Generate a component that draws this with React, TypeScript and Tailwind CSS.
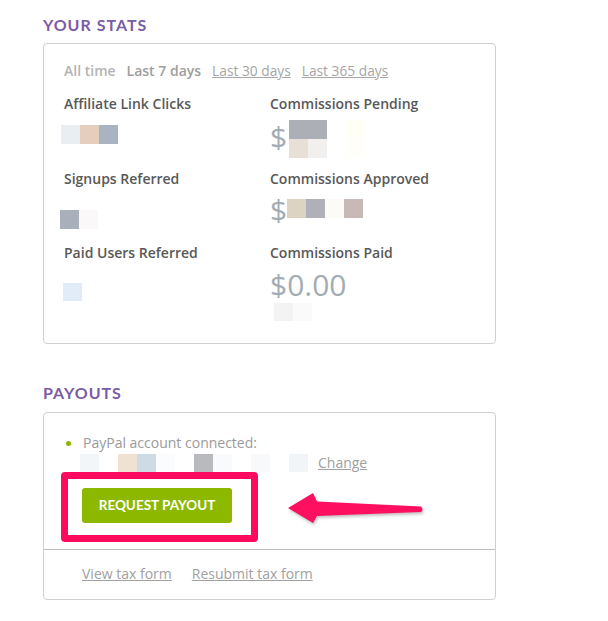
import React from "react";

type Cell = string;

function Mosaic({ rows, size = 19 }: { rows: Cell[][]; size?: number }) {
  return (
    <div className="flex flex-col">
      {rows.map((r, i) => (
        <div key={i} className="flex">
          {r.map((c, j) => (
            <div key={j} className={(size === 18 ? "w-[19px] h-[18px] " : "w-[19px] h-[19px] ") + c} />
          ))}
        </div>
      ))}
    </div>
  );
}

const heading =
  "font-['Lato',sans-serif] font-bold text-[16px] leading-[20px] tracking-[1px] text-[#7a5ca6] uppercase";

export default function App() {
  return (
    <div className="relative w-full min-h-[621px] bg-white font-['Open_Sans',sans-serif] pl-[43px] pt-[15px]">
      <div className={heading}>Your Stats</div>
      <div className="mt-[8px] w-[453px] border border-[#cfcfcf] rounded-[4px] pt-[17px] pb-[22px] pl-[20px] pr-[20px]">
        <div className="flex items-baseline gap-[11px] text-[14px] leading-[20px]">
          <span className="font-semibold text-[#b3b3b3]">All time</span>
          <span className="font-semibold text-[#9e9e9e]">Last 7 days</span>
          <span className="underline text-[13.75px] text-[#a6a6a6]">Last 30 days</span>
          <span className="underline text-[13.75px] text-[#a6a6a6]">Last 365 days</span>
        </div>
        <div className="mt-[13px] grid grid-cols-[206px_1fr] text-[14px] leading-[20px] text-[#585858] font-semibold">
          {/* Row 1 */}
          <div className="h-[75px]">
            <div>Affiliate Link Clicks</div>
            <div className="mt-[11px] -ml-[3px]">
              <Mosaic rows={[["bg-[#e9eef3]", "bg-[#e6cebf]", "bg-[#a9b4c3]"]]} />
            </div>
          </div>
          <div className="h-[75px]">
            <div>Commissions Pending</div>
            <div className="mt-[5px] flex items-start">
              <span className="font-normal text-[30px] leading-[36px] text-[#a3abb3]">$</span>
              <div className="mt-[1px] ml-[2px]">
                <Mosaic
                  rows={[
                    ["bg-[#acafb6]", "bg-[#acafb6]", "bg-transparent", "bg-[#fffef7]"],
                    ["bg-[#e8e0d7]", "bg-[#f1f0ef]", "bg-transparent", "bg-[#fffef8]"],
                  ]}
                />
              </div>
            </div>
          </div>
          {/* Row 2 */}
          <div className="h-[74px]">
            <div>Signups Referred</div>
            <div className="mt-[21px] -ml-[4px]">
              <Mosaic rows={[["bg-[#a9b0bc]", "bg-[#fbf8fa]"]]} />
            </div>
          </div>
          <div className="h-[74px]">
            <div>Commissions Approved</div>
            <div className="mt-[3px] flex items-start">
              <span className="font-normal text-[30px] leading-[36px] text-[#a3abb3]">$</span>
              <div className="mt-[7px]">
                <Mosaic rows={[["bg-[#dcd3c3]", "bg-[#b0b1b8]", "bg-[#fdfbf7]", "bg-[#c8b9b7]"]]} />
              </div>
            </div>
          </div>
          {/* Row 3 */}
          <div>
            <div>Paid Users Referred</div>
            <div className="mt-[20px] -ml-[1px]">
              <Mosaic rows={[["bg-[#e1ecf8]"]]} size={18} />
            </div>
          </div>
          <div>
            <div>Commissions Paid</div>
            <div className="mt-[4px] font-normal text-[30px] leading-[36px] text-[#a3abb3]">$0.00</div>
            <div className="ml-[4px]">
              <Mosaic rows={[["bg-[#f3f3f3]", "bg-[#fafafa]"]]} size={18} />
            </div>
          </div>
        </div>
      </div>

      <div className={heading + " mt-[39px]"}>Payouts</div>
      <div className="mt-[9px] w-[453px] border border-[#cfcfcf] rounded-[4px]">
        <div className="pt-[20px] px-[17px]">
          <div className="flex items-center text-[14px] leading-[20px] text-[#9a9a9a]">
            <span className="ml-[5px] w-[5px] h-[5px] rounded-full bg-[#8cb400]" />
            <span className="ml-[12px]">PayPal account connected:</span>
          </div>
          <div className="flex items-center h-[20px] ml-[19px] text-[14px] leading-[20px]">
            <Mosaic
              size={18}
              rows={[
                [
                  "bg-[#f3f6f9]",
                  "bg-transparent",
                  "bg-[#efe2d3]",
                  "bg-[#cddbe6]",
                  "bg-[#fbfcfd]",
                  "bg-transparent",
                  "bg-[#b8babd]",
                  "bg-[#f8fafb]",
                  "bg-transparent",
                  "bg-[#f7f9fb]",
                  "bg-transparent",
                  "bg-[#f1f5f8]",
                ],
              ]}
            />
            <span className="ml-[10px] underline text-[#a0a0a0]">Change</span>
          </div>
          <div className="-mt-[1px] w-[197px] h-[70px] border-[7px] border-[#ff0a5e] rounded-[4px] pt-[9px] pl-[14px]">
            <button className="w-[150px] h-[35px] rounded-[3px] bg-[#8cb800] text-white font-['Lato',sans-serif] font-bold text-[13.5px] leading-[35px] uppercase">
              Request Payout
            </button>
          </div>
        </div>
        <div className="mt-[7px] border-t border-[#bdbdbd] pt-[14px] pb-[15px] pl-[38px] flex gap-[20px] text-[14px] leading-[20px] text-[#a0a0a0]">
          <span className="underline">View tax form</span>
          <span className="underline">Resubmit tax form</span>
        </div>
      </div>

      <svg
        className="absolute left-[280px] top-[485px]"
        width="150"
        height="45"
        viewBox="280 485 150 45"
        style={{ filter: "drop-shadow(1px 2px 1.5px rgba(0,0,0,0.25))" }}
      >
        <path
          d="M288,508 L313,493 L317,501.5 L421,506.5 Q424,509.5 421,512 L317,516 L313,523 Z"
          fill="#ff0f60"
        />
      </svg>
    </div>
  );
}
